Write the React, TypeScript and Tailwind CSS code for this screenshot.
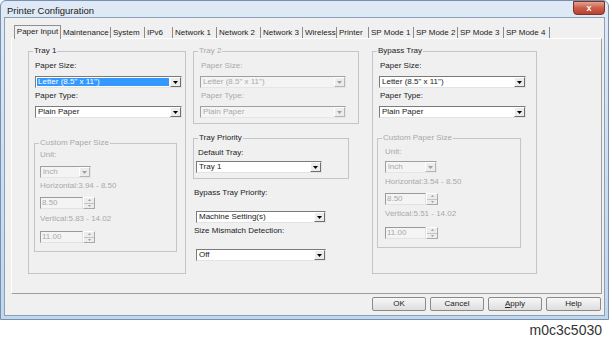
import React from "react";

type LProps = { children: React.ReactNode; disabled?: boolean; className?: string };

function Label({ children, disabled, className = "" }: LProps) {
  return (
    <div
      className={`h-[10px] text-[8px] leading-[10px] whitespace-nowrap ${
        disabled ? "text-[#a9a9a9]" : "text-[#222]"
      } ${className}`}
    >
      {children}
    </div>
  );
}

function Arrow({ disabled, up }: { disabled?: boolean; up?: boolean }) {
  return (
    <svg width="5" height="3" viewBox="0 0 5 3">
      <path d={up ? "M0 3H5L2.5 0Z" : "M0 0H5L2.5 3Z"} fill={disabled ? "#a0a0a0" : "#000"} />
    </svg>
  );
}

function Combo({
  text,
  disabled,
  selected,
  className = "",
}: {
  text: string;
  disabled?: boolean;
  selected?: boolean;
  className?: string;
}) {
  return (
    <div
      className={`flex h-[12px] border ${
        disabled
          ? "border-t-[#a0a0a0] border-l-[#a0a0a0] border-b-[#e6e6e6] border-r-[#e6e6e6] bg-[#f4f4f4]"
          : "border-t-[#7a7a7a] border-l-[#7a7a7a] border-b-[#e3e3e3] border-r-[#e3e3e3] bg-white"
      } ${className}`}
    >
      <div className="flex-1 min-w-0 p-[1px] flex">
        <div
          className={`flex-1 pl-[1px] text-[8px] leading-[8px] whitespace-nowrap overflow-hidden ${
            selected ? "bg-[#3399ff] text-white" : disabled ? "text-[#a9a9a9]" : "text-[#222]"
          }`}
        >
          {text}
        </div>
      </div>
      <div
        className={`w-[11px] h-[10px] flex items-center justify-center border ${
          disabled
            ? "border-t-[#ffffff] border-l-[#ffffff] border-r-[#b5b5b5] border-b-[#b5b5b5]"
            : "border-t-[#ffffff] border-l-[#ffffff] border-r-[#6f6f6f] border-b-[#6f6f6f]"
        } bg-[#ececec]`}
      >
        <Arrow disabled={disabled} />
      </div>
    </div>
  );
}

function Spin({ value, tw }: { value: string; tw: string }) {
  return (
    <div className="flex h-[12px]">
      <div
        className={`${tw} h-full border border-t-[#9a9a9a] border-l-[#9a9a9a] border-b-[#e3e3e3] border-r-[#e3e3e3] bg-[#f4f4f4] pl-[1px] text-[8px] leading-[10px] text-[#a9a9a9]`}
      >
        {value}
      </div>
      <div className="w-[12px] h-full flex flex-col border border-t-[#ffffff] border-l-[#ffffff] border-r-[#a8a8a8] border-b-[#a8a8a8] bg-[#ececec]">
        <div className="flex-1 flex items-center justify-center border-b border-[#c4c4c4]">
          <svg width="3" height="2" viewBox="0 0 3 2">
            <path d="M0 2H3L1.5 0Z" fill="#a0a0a0" />
          </svg>
        </div>
        <div className="flex-1 flex items-center justify-center">
          <svg width="3" height="2" viewBox="0 0 3 2">
            <path d="M0 0H3L1.5 2Z" fill="#a0a0a0" />
          </svg>
        </div>
      </div>
    </div>
  );
}

function Group({
  title,
  disabled,
  className = "",
  children,
}: {
  title: string;
  disabled?: boolean;
  className?: string;
  children?: React.ReactNode;
}) {
  return (
    <fieldset className={`border border-[#c3c6c9] shrink-0 ${className}`}>
      <legend
        className={`ml-[4px] px-[1px] text-[8px] leading-[10px] whitespace-nowrap ${
          disabled ? "text-[#a9a9a9]" : "text-[#222]"
        }`}
      >
        {title}
      </legend>
      {children}
    </fieldset>
  );
}

const tabs: [string, string][] = [
  ["Maintenance", "w-[50px]"],
  ["System", "w-[34px]"],
  ["IPv6", "w-[28px]"],
  ["Network 1", "w-[44px]"],
  ["Network 2", "w-[44px]"],
  ["Network 3", "w-[42px]"],
  ["Wireless", "w-[34px]"],
  ["Printer", "w-[32px]"],
  ["SP Mode 1", "w-[45px]"],
  ["SP Mode 2", "w-[44px]"],
  ["SP Mode 3", "w-[46px]"],
  ["SP Mode 4", "w-[46px]"],
];

function Btn({ children, className = "" }: { children: React.ReactNode; className?: string }) {
  return (
    <div
      className={`h-[14px] flex items-center justify-center rounded-[2px] border border-[#8a8a8a] bg-gradient-to-b from-[#f7f7f7] to-[#dedede] text-[8px] leading-[10px] text-[#222] ${className}`}
    >
      {children}
    </div>
  );
}

export default function App() {
  return (
    <div className="w-[612px] h-[347px] bg-white font-['Liberation_Sans',Arial,sans-serif] text-black overflow-hidden">
      {/* window */}
      <div className="w-[609px] h-[320px] rounded-t-[6px] border border-[#7590b0] bg-gradient-to-b from-[#dfeaf6] via-[#cddff2] to-[#c2d6ec] flex flex-col px-[3px] pb-[3px]">
        {/* title bar */}
        <div className="h-[16px] flex justify-between shrink-0">
          <div className="pt-[4px] pl-[3px] text-[9.5px] leading-[11px] text-[#1a1a1a] whitespace-nowrap">
            Printer Configuration
          </div>
          <div className="w-[32px] h-[14px] rounded-b-[4px] border border-[#7c3328] bg-gradient-to-b from-[#e4a28f] via-[#cc5c48] to-[#b8432f] flex items-center justify-center text-white text-[9px] leading-[9px] font-bold">
            x
          </div>
        </div>
        {/* client */}
        <div className="flex-1 bg-[#f0f0f0] border border-[#8d9fb5] flex flex-col">
          {/* tabs */}
          <div className="flex items-start ml-[9px] mt-[7px] h-[13px] shrink-0 text-[#222]">
            <div className="relative z-10 w-[47px] h-[14px] border-l border-t border-r border-[#8f8f8f] bg-[#f0f0f0] text-center text-[8px] leading-[12px]">
              Paper Input
            </div>
            {tabs.map(([t, w]) => (
              <div
                key={t}
                className={`${w} h-[11px] mt-[2px] border-r border-[#8a8a8a] pl-[2px] text-[8px] leading-[11px] whitespace-nowrap`}
              >
                {t}
              </div>
            ))}
          </div>
          {/* panel */}
          <div className="ml-[6px] w-[591px] h-[256px] shrink-0 border border-t-[#ffffff] border-l-[#ffffff] border-r-[#9f9f9f] border-b-[#9f9f9f] flex items-start pl-[16px] pt-[7px]">
            {/* Tray 1 */}
            <Group title="Tray 1" className="w-[158px] h-[228px]">
              <div className="pl-[5px] flex flex-col items-start">
                <Label className="ml-[1px] mt-[5px]">Paper Size:</Label>
                <Combo className="ml-[1px] mt-[5px] w-[147px]" text={'Letter (8.5" x 11")'} selected />
                <Label className="ml-[1px] mt-[3px]">Paper Type:</Label>
                <Combo className="ml-[1px] mt-[5px] w-[147px]" text="Plain Paper" />
                <Group title="Custom Paper Size" disabled className="mt-[20px] w-[143px] h-[114px]">
                  <div className="pl-[5px] flex flex-col items-start">
                    <Label disabled className="mt-[2px]">Unit:</Label>
                    <Combo disabled className="mt-[6px] w-[51px]" text="inch" />
                    <Label disabled className="mt-[3px]">Horizontal:3.94 - 8.50</Label>
                    <div className="mt-[6px]">
                      <Spin value="8.50" tw="w-[43px]" />
                    </div>
                    <Label disabled className="mt-[5px]">Vertical:5.83 - 14.02</Label>
                    <div className="mt-[7px]">
                      <Spin value="11.00" tw="w-[43px]" />
                    </div>
                  </div>
                </Group>
              </div>
            </Group>

            {/* middle column */}
            <div className="ml-[7px] w-[166px] flex flex-col items-start shrink-0">
              <Group title="Tray 2" disabled className="w-[166px] h-[78px]">
                <div className="pl-[6px] flex flex-col items-start">
                  <Label disabled className="ml-[1px] mt-[5px]">Paper Size:</Label>
                  <Combo disabled className="mt-[5px] w-[146px]" text={'Letter (8.5" x 11")'} />
                  <Label disabled className="ml-[1px] mt-[3px]">Paper Type:</Label>
                  <Combo disabled className="mt-[5px] w-[146px]" text="Plain Paper" />
                </div>
              </Group>
              <Group title="Tray Priority" className="mt-[9px] w-[156px] h-[46px]">
                <div className="pl-[2px] flex flex-col items-start">
                  <Label className="ml-[2px] mt-[5px]">Default Tray:</Label>
                  <Combo className="mt-[3px] w-[126px]" text="Tray 1" />
                </div>
              </Group>
              <Label className="ml-[1px] mt-[9px]">Bypass Tray Priority:</Label>
              <Combo className="ml-[3px] mt-[13px] w-[130px]" text="Machine Setting(s)" />
              <Label className="ml-[1px] mt-[3px]">Size Mismatch Detection:</Label>
              <Combo className="ml-[3px] mt-[13px] w-[130px]" text="Off" />
            </div>

            {/* Bypass tray */}
            <Group title="Bypass Tray" className="ml-[13px] w-[165px] h-[228px]">
              <div className="pl-[4px] flex flex-col items-start">
                <Label className="ml-[3px] mt-[5px]">Paper Size:</Label>
                <Combo className="ml-[2px] mt-[5px] w-[147px]" text={'Letter (8.5" x 11")'} />
                <Label className="ml-[3px] mt-[3px]">Paper Type:</Label>
                <Combo className="ml-[2px] mt-[5px] w-[147px]" text="Plain Paper" />
                <Group title="Custom Paper Size" disabled className="mt-[15px] w-[144px] h-[115px]">
                  <div className="pl-[7px] flex flex-col items-start">
                    <Label disabled className="mt-[4px]">Unit:</Label>
                    <Combo disabled className="mt-[4px] w-[52px]" text="inch" />
                    <Label disabled className="mt-[4px]">Horizontal:3.54 - 8.50</Label>
                    <div className="mt-[6px]">
                      <Spin value="8.50" tw="w-[41px]" />
                    </div>
                    <Label disabled className="mt-[4px]">Vertical:5.51 - 14.02</Label>
                    <div className="mt-[8px]">
                      <Spin value="11.00" tw="w-[41px]" />
                    </div>
                  </div>
                </Group>
              </div>
            </Group>
          </div>
          {/* buttons */}
          <div className="flex justify-end gap-[4px] pr-[3px] mt-[3px]">
            <Btn className="w-[54px]">OK</Btn>
            <Btn className="w-[54px]">Cancel</Btn>
            <Btn className="w-[54px]">
              <span>
                <span className="underline">A</span>pply
              </span>
            </Btn>
            <Btn className="w-[55px]">Help</Btn>
          </div>
        </div>
      </div>
      <div className="flex justify-end pr-[10px] pt-[2px] text-[14px] leading-[16px] text-[#333]">m0c3c5030</div>
    </div>
  );
}
